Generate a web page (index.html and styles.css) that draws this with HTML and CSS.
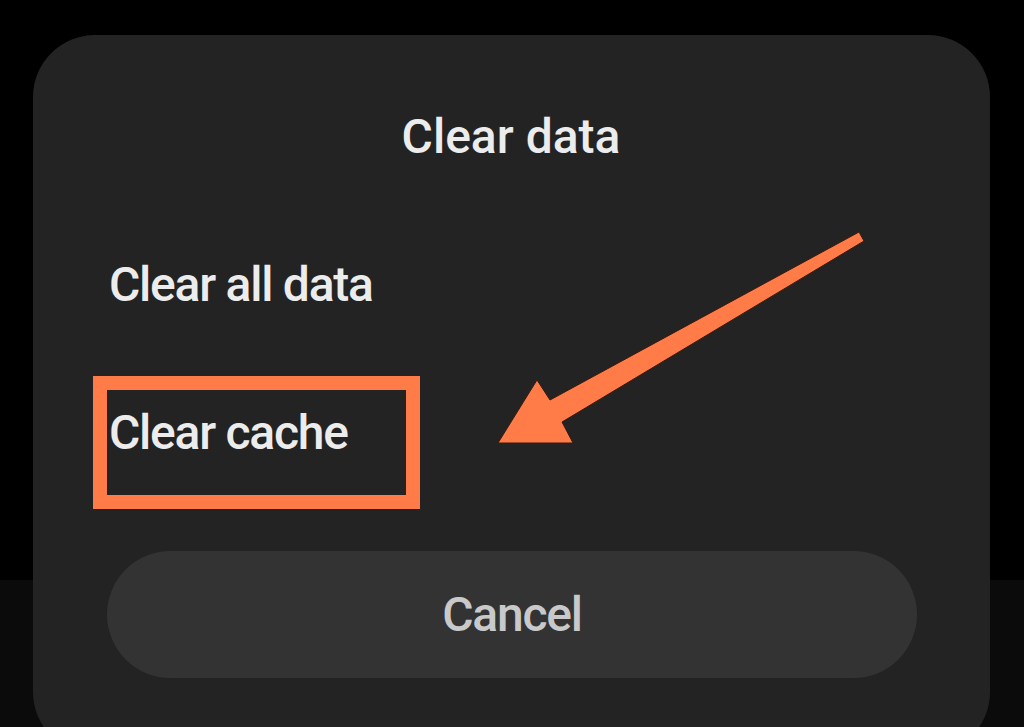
FILE: index.html
```html
<!DOCTYPE html>
<html lang="en">
<head>
<meta charset="utf-8">
<title>Clear data</title>
<link rel="stylesheet" href="styles.css">
</head>
<body>
<div class="screen">
  <div class="bottom-bar"></div>
</div>
<div class="dialog">
  <div class="title">Clear data</div>
  <div class="option">Clear all data</div>
  <div class="option">Clear cache</div>
  <div class="cancel">Cancel</div>
  <div class="highlight"></div>
  <svg class="arrow" width="957" height="719" viewBox="0 0 957 719">
    <polygon points="465,408 504,345 517,365 826,197 831,206 529,387 540,408" fill="#ff7b47" stroke="#3a1a0c" stroke-width="1"/>
  </svg>
</div>
</body>
</html>
```

FILE: styles.css
```css
html, body {
  margin: 0;
  padding: 0;
  background: #000;
  overflow: hidden;
  font-family: Roboto, "Liberation Sans", sans-serif;
}

.screen {
  height: 727px;
  display: flex;
  flex-direction: column;
  justify-content: flex-end;
  background: #000;
}

.bottom-bar {
  height: 147px;
  background: #0b0b0b;
}

.dialog {
  position: absolute;
  left: 33px;
  top: 35px;
  width: 957px;
  height: 719px;
  box-sizing: border-box;
  background: #232323;
  border-radius: 62px;
  padding: 74px 73px 0 74px;
  display: flex;
  flex-direction: column;
}

.title {
  height: 56px;
  line-height: 56px;
  font-size: 48px;
  font-weight: 500;
  color: #ececec;
  text-align: center;
  margin-left: -2px;
}

.option {
  height: 56px;
  line-height: 56px;
  font-size: 48px;
  font-weight: 500;
  letter-spacing: -1.25px;
  color: #ececec;
  margin-top: 92px;
  padding-left: 2px;
}

.cancel {
  margin-top: 90px;
  height: 127px;
  border-radius: 64px;
  background: #333333;
  color: #c9c9c9;
  font-size: 48px;
  font-weight: 500;
  letter-spacing: -1.2px;
  display: flex;
  align-items: center;
  justify-content: center;
}

.highlight {
  position: absolute;
  left: 60px;
  top: 341px;
  width: 327px;
  height: 133px;
  box-sizing: border-box;
  border: 14px solid #ff7b47;
}

.arrow {
  position: absolute;
  left: 0;
  top: 0;
}
```
